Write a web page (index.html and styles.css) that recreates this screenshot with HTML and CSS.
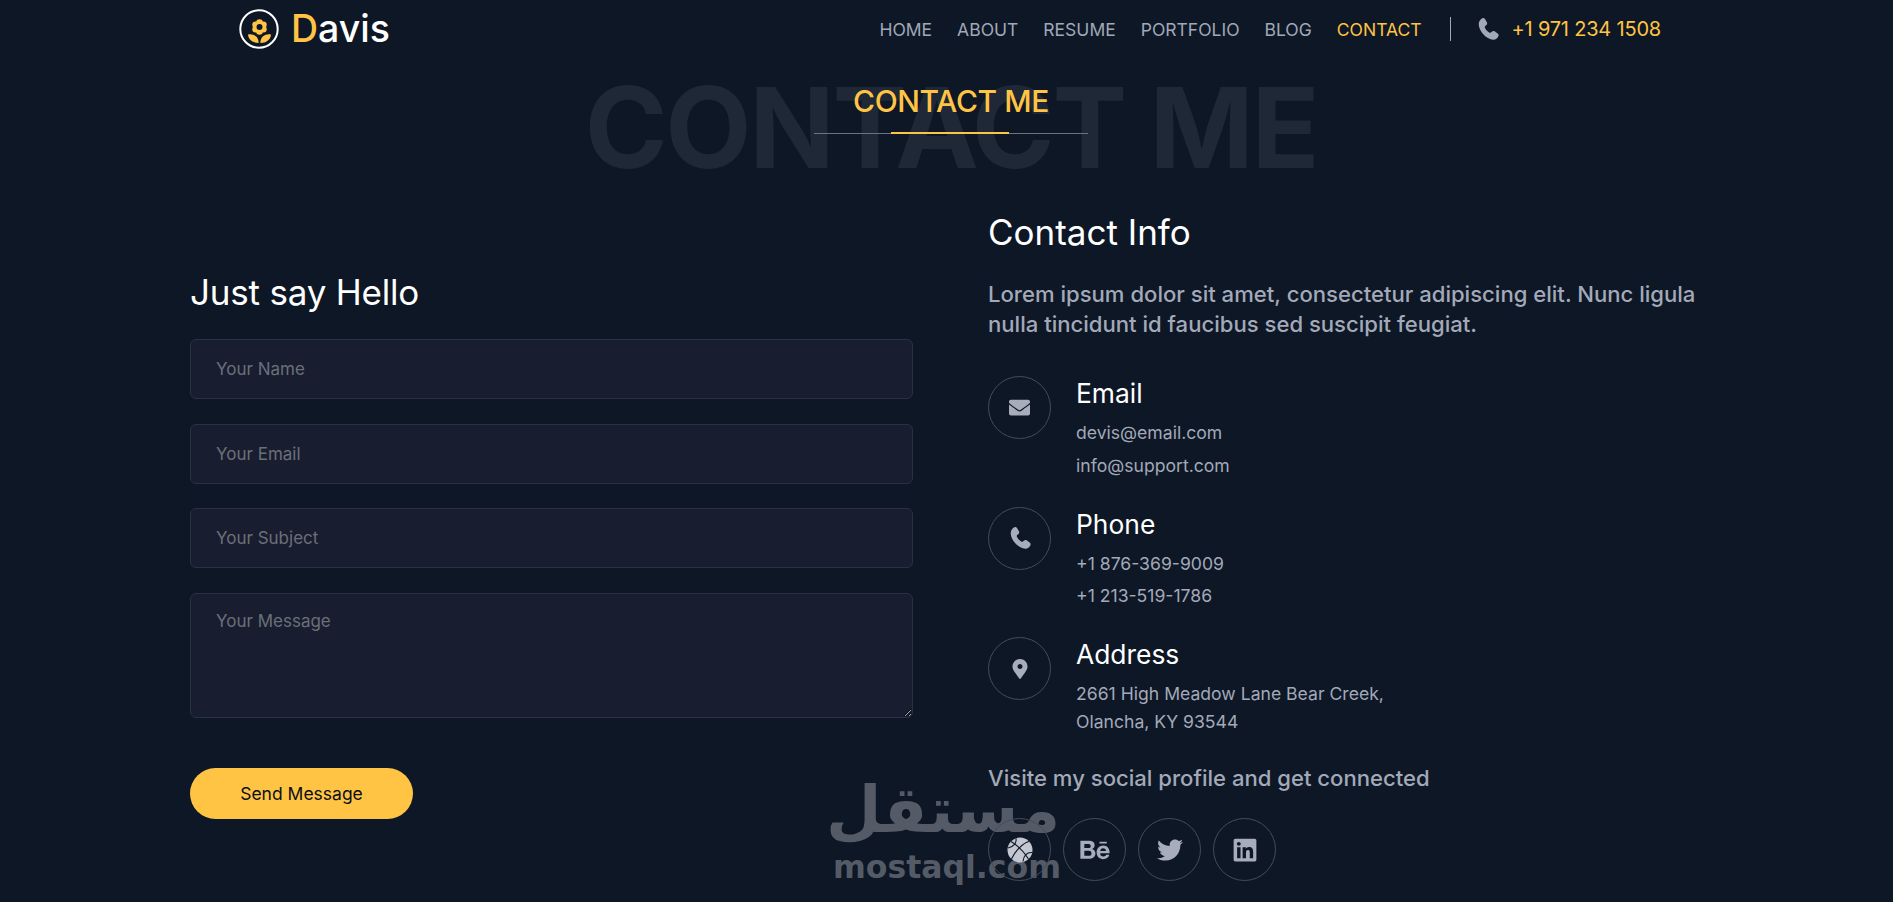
FILE: index.html
```html
<!DOCTYPE html>
<html lang="en">
<head>
  <meta charset="UTF-8">
  <meta name="viewport" content="width=device-width, initial-scale=1.0">
  <title>Davis - Contact</title>
  <link rel="stylesheet" href="styles.css">
</head>
<body>
  <header class="topbar">
    <a class="logo" href="#">
      <svg class="logo-mark" viewBox="0 0 40 40">
        <circle cx="20" cy="20" r="18.700" fill="none" stroke="#fff" stroke-width="2"/>
        <g fill="#ffc444">
          <circle cx="20.500" cy="13.500" r="3.300"/>
          <circle cx="20.500" cy="22.500" r="3.300"/>
          <circle cx="16.600" cy="15.700" r="3.300"/>
          <circle cx="24.400" cy="15.700" r="3.300"/>
          <circle cx="16.600" cy="20.300" r="3.300"/>
          <circle cx="24.400" cy="20.300" r="3.300"/>
          <path d="M9 25.500c5-1 10.500 1.500 10.700 8.500C14 34 9.500 31 9 25.500z"/>
          <path d="M32 25.500c-5-1-10.500 1.500-10.700 8.500C27 34 31.500 31 32 25.500z"/>
        </g>
        <circle cx="20.500" cy="18" r="3" fill="#0d1726"/>
      </svg>
      <span class="logo-text"><b>D</b>avis</span>
    </a>
    <nav class="menu">
      <a href="#">HOME</a>
      <a href="#">ABOUT</a>
      <a href="#">RESUME</a>
      <a href="#">PORTFOLIO</a>
      <a href="#">BLOG</a>
      <a href="#" class="active">CONTACT</a>
    </nav>
    <div class="top-phone">
      <svg class="top-phone-icon" viewBox="0 0 24 24"><use href="#icon-phone"/></svg>
      <span>+1 971 234 1508</span>
    </div>
  </header>

  <section class="title-block">
    <div class="title-bg">CONTACT ME</div>
    <h2 class="title">CONTACT ME</h2>
    <div class="title-line"><span></span></div>
  </section>

  <main class="contact">
    <div class="form-col">
      <h3 class="col-title">Just say Hello</h3>
      <form class="form">
        <input type="text" placeholder="Your Name">
        <input type="text" placeholder="Your Email">
        <input type="text" placeholder="Your Subject">
        <textarea placeholder="Your Message"></textarea>
        <button type="button" class="send">Send Message</button>
      </form>
    </div>

    <div class="info-col">
      <h3 class="col-title">Contact Info</h3>
      <p class="lead">Lorem ipsum dolor sit amet, consectetur adipiscing elit. Nunc ligula nulla tincidunt id faucibus sed suscipit feugiat.</p>

      <div class="info-item">
        <div class="round">
          <svg class="i-21" viewBox="0 0 512 512"><path d="M502.300 190.800c3.900-3.100 9.700-.2 9.700 4.700V400c0 26.500-21.500 48-48 48H48c-26.500 0-48-21.500-48-48V195.600c0-5 5.700-7.800 9.700-4.700 22.400 17.400 52.100 39.500 154.100 113.600 21.100 15.400 56.700 47.800 92.200 47.600 35.700.3 72-32.800 92.300-47.600 102-74.100 131.600-96.300 154-113.700zM256 320c23.200.4 56.600-29.200 73.400-41.400 132.700-96.300 142.800-104.700 173.400-128.700 5.800-4.500 9.200-11.500 9.200-18.900v-19c0-26.500-21.500-48-48-48H48C21.500 64 0 85.500 0 112v19c0 7.400 3.400 14.300 9.200 18.900 30.600 23.900 40.700 32.400 173.400 128.700 16.800 12.200 50.200 41.800 73.400 41.400z"/></svg>
        </div>
        <div class="info-text">
          <h4>Email</h4>
          <p>devis@email.com</p>
          <p>info@support.com</p>
        </div>
      </div>

      <div class="info-item">
        <div class="round">
          <svg class="i-24" viewBox="0 0 24 24"><use href="#icon-phone"/></svg>
        </div>
        <div class="info-text">
          <h4>Phone</h4>
          <p>+1 876-369-9009</p>
          <p>+1 213-519-1786</p>
        </div>
      </div>

      <div class="info-item">
        <div class="round">
          <svg class="i-20" viewBox="0 0 384 512"><path d="M172.268 501.670C26.970 291.031 0 269.413 0 192 0 85.961 85.961 0 192 0s192 85.961 192 192c0 77.413-26.970 99.031-172.268 309.670-9.535 13.774-29.930 13.773-39.464 0zM192 256c35 0 64-29 64-64s-29-64-64-64-64 29-64 64 29 64 64 64z"/></svg>
        </div>
        <div class="info-text address">
          <h4>Address</h4>
          <p>2661 High Meadow Lane Bear Creek,</p>
          <p>Olancha, KY 93544</p>
        </div>
      </div>

      <p class="social-label">Visite my social profile and get connected</p>
      <div class="social">
        <a class="round" href="#">
          <svg class="i-26" viewBox="0 0 26 26">
            <circle cx="13" cy="13" r="12.500" fill="#c3c7d1"/>
            <g fill="none" stroke="#0d1726" stroke-width="1.100">
              <path d="M4 4.500c6 3.500 13 10.500 17.500 17.500"/>
              <path d="M22 4.500C16 6 8 14 4.500 22"/>
              <path d="M9 1.500c1 4-1.500 8-8 9.500"/>
              <path d="M25 15.500c-5-.5-8.500 3-9 9"/>
            </g>
          </svg>
        </a>
        <a class="round" href="#">
          <svg class="i-30" viewBox="0 0 576 512"><path d="M232 237.200c31.800-15.200 48.400-38.200 48.400-74 0-70.600-52.600-87.800-113.300-87.800H0v354.400h171.800c64.400 0 124.900-30.900 124.900-102.900 0-44.500-21.100-77.400-64.700-89.700zM77.900 135.900H151c28.100 0 53.400 7.900 53.400 40.500 0 30.100-19.700 42.200-47.500 42.200h-79v-82.700zm83.300 233.700H77.900V272h84.900c34.300 0 56 14.300 56 50.600 0 35.800-25.900 47-57.600 47zm358.500-240.700H376V94h143.700v34.900zM576 305.200c0-75.900-44.400-139.200-124.900-139.200-78.200 0-131.300 58.800-131.300 135.800 0 79.900 50.300 134.700 131.300 134.700 61.300 0 101-27.600 120.100-86.300H509c-6.700 21.900-34.300 33.500-55.700 33.500-41.300 0-63-24.200-63-65.300h185.100c.3-4.200.6-8.700.6-13.200zM390.400 274c2.300-33.700 24.700-54.800 58.500-54.800 35.400 0 53.200 20.800 56.200 54.800H390.400z"/></svg>
        </a>
        <a class="round" href="#">
          <svg class="i-26" viewBox="0 0 512 512"><path d="M459.370 151.716c.325 4.548.325 9.097.325 13.645 0 138.720-105.583 298.558-298.558 298.558-59.452 0-114.680-17.219-161.137-47.106 8.447.974 16.568 1.299 25.340 1.299 49.055 0 94.213-16.568 130.274-44.832-46.132-.975-84.792-31.188-98.112-72.772 6.498.974 12.995 1.624 19.818 1.624 9.421 0 18.843-1.300 27.614-3.573-48.081-9.747-84.143-51.980-84.143-102.985v-1.299c13.969 7.797 30.214 12.670 47.431 13.319-28.264-18.843-46.781-51.005-46.781-87.391 0-19.492 5.197-37.360 14.294-52.954 51.655 63.675 129.300 105.258 216.365 109.807-1.624-7.797-2.599-15.918-2.599-24.040 0-57.828 46.782-104.934 104.934-104.934 30.213 0 57.502 12.670 76.670 33.137 23.715-4.548 46.456-13.320 66.599-25.340-7.798 24.366-24.366 44.833-46.132 57.827 21.117-2.273 41.584-8.122 60.426-16.243-14.292 20.791-32.161 39.308-52.628 54.253z"/></svg>
        </a>
        <a class="round" href="#">
          <svg class="i-26" viewBox="0 0 448 512"><path d="M416 32H31.900C14.300 32 0 46.500 0 64.300v383.400C0 465.500 14.300 480 31.900 480H416c17.600 0 32-14.500 32-32.300V64.300c0-17.800-14.400-32.300-32-32.300zM135.400 416H69V202.200h66.500V416zm-33.200-243c-21.300 0-38.500-17.300-38.500-38.500S80.900 96 102.200 96c21.200 0 38.500 17.300 38.500 38.500 0 21.300-17.200 38.500-38.500 38.500zm282.100 243h-66.400V312c0-24.800-.5-56.700-34.500-56.700-34.600 0-39.900 27-39.900 54.900V416h-66.400V202.200h63.700v29.200h.9c8.900-16.800 30.600-34.500 62.900-34.500 67.200 0 79.700 44.300 79.700 101.900V416z"/></svg>
        </a>
      </div>
    </div>
  </main>

  <!-- watermark over the page -->
  <div class="watermark">
    <div class="wm-ar" lang="ar" dir="rtl">مستقل</div>
    <div class="wm-en">mostaql.com</div>
  </div>

  <svg class="defs" width="0" height="0">
    <symbol id="icon-phone" viewBox="0 0 24 24">
      <path d="M6.300 1.200c1-.5 2.100-.2 2.700.8l1.900 3.300c.5.900.4 2-.4 2.700L9.200 9.100c-.5.400-.6 1-.3 1.600 1.100 2 2.400 3.500 4.300 4.900.5.400 1.200.3 1.700-.1l1.200-1c.8-.7 1.900-.7 2.800-.1l2.800 2c.9.700 1.200 1.800.7 2.800-1 2.100-2.800 3.700-5 3.600C10 22.400 2.800 14 2.700 7.100c0-2.500 1.500-4.700 3.600-5.900z"/>
    </symbol>
  </svg>
</body>
</html>
```

FILE: styles.css
```css
* {
  box-sizing: border-box;
}
html, body {
  margin: 0;
  padding: 0;
  height: 100%;
  overflow: hidden;
}
body {
  background-color: #0d1726;
  color: #fff;
  font-family: Inter, "Liberation Sans", sans-serif;
}
a {
  color: inherit;
  text-decoration: none;
}

/* top bar */
.topbar {
  display: flex;
  align-items: center;
  height: 58px;
  padding: 0 232px 0 239px;
}
.logo {
  display: flex;
  align-items: center;
  gap: 12px;
}
.logo-mark {
  width: 40px;
  height: 40px;
}
.logo-text {
  font-size: 37.500px;
  font-weight: 500;
  line-height: 1;
}
.logo-text b {
  color: #ffc444;
  font-weight: 500;
}
.menu {
  display: flex;
  gap: 25px;
  margin-left: auto;
  font-size: 17.500px;
  color: #a1a8b8;
}
.menu .active {
  color: #ffc444;
}
.top-phone {
  display: flex;
  align-items: center;
  gap: 12px;
  height: 24px;
  margin-left: 28px;
  padding-left: 25px;
  border-left: 1px solid #a1a8b8;
  color: #ffc444;
  font-size: 20px;
  letter-spacing: -.2px;
}
.top-phone-icon {
  width: 24px;
  height: 24px;
  fill: #a1a8b8;
}

/* section title */
.title-block {
  position: relative;
  height: 152px;
  padding-left: 9px;
  text-align: center;
}
.title-bg {
  position: absolute;
  top: 13px;
  left: 9px;
  right: 0;
  font-size: 112px;
  font-weight: 700;
  line-height: 112px;
  letter-spacing: -2.200px;
  color: #1e2837;
}
.title {
  position: relative;
  margin: 0;
  padding-top: 25px;
  font-size: 30px;
  font-weight: 500;
  line-height: 36px;
  letter-spacing: -.4px;
  color: #ffc444;
}
.title-line {
  position: relative;
  width: 274px;
  height: 1px;
  margin: 14px auto 0;
  background: #6b7280;
}
.title-line span {
  position: absolute;
  top: -1px;
  left: 77px;
  width: 118px;
  height: 2px;
  background: #ffc444;
}

/* two columns */
.contact {
  display: flex;
  padding: 0 190px;
}
.form-col {
  flex: none;
  width: 723px;
  padding-top: 60px;
}
.form-col .col-title {
  letter-spacing: -.2px;
}
.info-col {
  flex: none;
  width: 715px;
  margin-left: 75px;
}
.col-title {
  margin: 0;
  font-size: 35px;
  font-weight: 400;
  line-height: 44px;
  color: #fff;
}
.form {
  display: flex;
  flex-direction: column;
  gap: 24.500px;
  margin-top: 25px;
}
.form input,
.form textarea {
  display: block;
  width: 100%;
  height: 60px;
  padding: 0 25px;
  background: #181e30;
  border: 1px solid #2a3142;
  border-radius: 6px;
  color: #fff;
  font-family: inherit;
  font-size: 17px;
  outline: none;
}
.form textarea {
  height: 125px;
  padding-top: 17px;
}
.form ::placeholder {
  color: #6b6f79;
}
.send {
  width: 223px;
  height: 51px;
  margin-top: 25.500px;
  border: 0;
  border-radius: 26px;
  background: #ffc444;
  color: #0a0f18;
  font-family: inherit;
  font-size: 17.500px;
}

/* contact info */
.lead {
  margin: 25px 0 0;
  font-size: 22.100px;
  font-weight: 500;
  line-height: 30px;
  color: #a3a9b8;
}
.info-item {
  display: flex;
  gap: 25px;
  margin-top: 28px;
}
.info-item:first-of-type {
  margin-top: 37px;
}
.round {
  display: flex;
  align-items: center;
  justify-content: center;
  flex: none;
  width: 63px;
  height: 63px;
  border: 1px solid #454c59;
  border-radius: 50%;
}
.round svg {
  fill: #a8adbb;
}
.i-20 {
  width: 20px;
  height: 20px;
}
.i-21 {
  width: 21px;
  height: 21px;
}
.i-24 {
  width: 24px;
  height: 24px;
}
.i-26 {
  width: 26px;
  height: 26px;
}
.i-30 {
  width: 30px;
  height: 26px;
}
.info-text h4 {
  margin: -1px 0 8px;
  font-size: 26.400px;
  font-weight: 400;
  line-height: 36px;
}
.info-text p {
  margin: 5.500px 0 0;
  font-size: 17.600px;
  line-height: 27px;
  color: #a3a9b8;
}
.info-text h4 + p {
  margin-top: 0;
}
.info-text.address h4 {
  margin-bottom: 8px;
}
.info-text.address p {
  margin: 0;
  line-height: 28px;
}
.social-label {
  margin: 27px 0 0;
  font-size: 22.100px;
  font-weight: 500;
  line-height: 30px;
  color: #a3a9b8;
}
.social {
  position: relative;
  z-index: 2;
  display: flex;
  gap: 12px;
  margin-top: 25px;
}

/* watermark */
.watermark {
  position: absolute;
  top: 770px;
  left: 833px;
  width: 227px;
  text-align: center;
  color: #555b66;
}
.wm-ar {
  padding-left: 7px;
  font-family: "DejaVu Sans", sans-serif;
  font-size: 64px;
  font-weight: 700;
  line-height: 80px;
}
.wm-en {
  font-family: "DejaVu Sans", sans-serif;
  font-size: 31.500px;
  font-weight: 700;
  line-height: 34px;
}
.defs {
  position: absolute;
}
```
